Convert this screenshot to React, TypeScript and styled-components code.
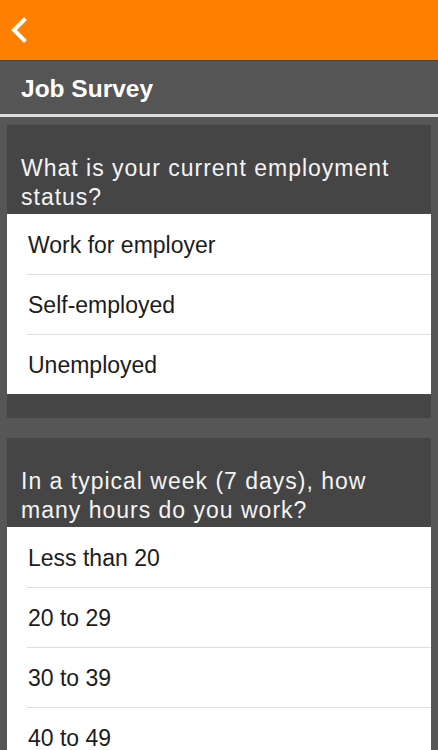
import React from 'react';
import styled, { createGlobalStyle } from 'styled-components';

const questions = [
  {
    id: 'status',
    text: 'What is your current employment status?',
    options: ['Work for employer', 'Self-employed', 'Unemployed'],
  },
  {
    id: 'hours',
    text: 'In a typical week (7 days), how many hours do you work?',
    options: ['Less than 20', '20 to 29', '30 to 39', '40 to 49', '50 or more'],
  },
];

const App: React.FC = () => (
  <Screen>
    <GlobalStyle />
    <TopBar>
      <BackButton aria-label="Back">
        <svg width="20" height="30" viewBox="0 0 20 30">
          <path d="M16.5 3.5 L5 15 L16.5 26.5" fill="none" stroke="#fff" strokeWidth="4" />
        </svg>
      </BackButton>
    </TopBar>
    <TitleBar>Job Survey</TitleBar>
    <Content>
      {questions.map((q) => (
        <Card key={q.id}>
          <Question>{q.text}</Question>
          <OptionList>
            {q.options.map((o) => (
              <Option key={o}>{o}</Option>
            ))}
          </OptionList>
        </Card>
      ))}
    </Content>
  </Screen>
);

const GlobalStyle = createGlobalStyle`
  html, body {
    margin: 0;
    padding: 0;
    background: #565656;
    font-family: "Liberation Sans", Arial, sans-serif;
  }
`;

const Screen = styled.div`
  width: 438px;
  height: 750px;
  overflow: hidden;
  background: #565656;
`;

const TopBar = styled.div`
  display: flex;
  align-items: center;
  height: 60px;
  padding-left: 9px;
  box-sizing: border-box;
  background: #ff8000;
`;

const BackButton = styled.button`
  display: flex;
  background: none;
  border: 0;
  padding: 0;
  cursor: pointer;
`;

const TitleBar = styled.div`
  display: flex;
  align-items: center;
  height: 57px;
  box-sizing: border-box;
  padding: 3px 21px 0;
  border-top: 1px solid #484848;
  border-bottom: 3px solid #dcdcdc;
  background: #555555;
  color: #ffffff;
  font-size: 24.5px;
  font-weight: 700;
`;

const Content = styled.div`
  display: flex;
  flex-direction: column;
  gap: 20px;
  padding: 8px 7px;
`;

const Card = styled.div`
  background: #454545;
  padding-bottom: 24px;
`;

const Question = styled.div`
  padding: 29px 14px 2px;
  color: #f4f4f4;
  font-size: 23px;
  line-height: 29px;
  letter-spacing: 1px;
`;

const OptionList = styled.div`
  background: #ffffff;
`;

const Option = styled.div`
  height: 60px;
  box-sizing: border-box;
  margin-left: 20px;
  padding: 2px 0 0 1px;
  line-height: 58px;
  color: #1c1c1c;
  font-size: 23px;

  & + & {
    border-top: 1px solid #dedede;
    padding-top: 1px;
  }
`;

export default App;
